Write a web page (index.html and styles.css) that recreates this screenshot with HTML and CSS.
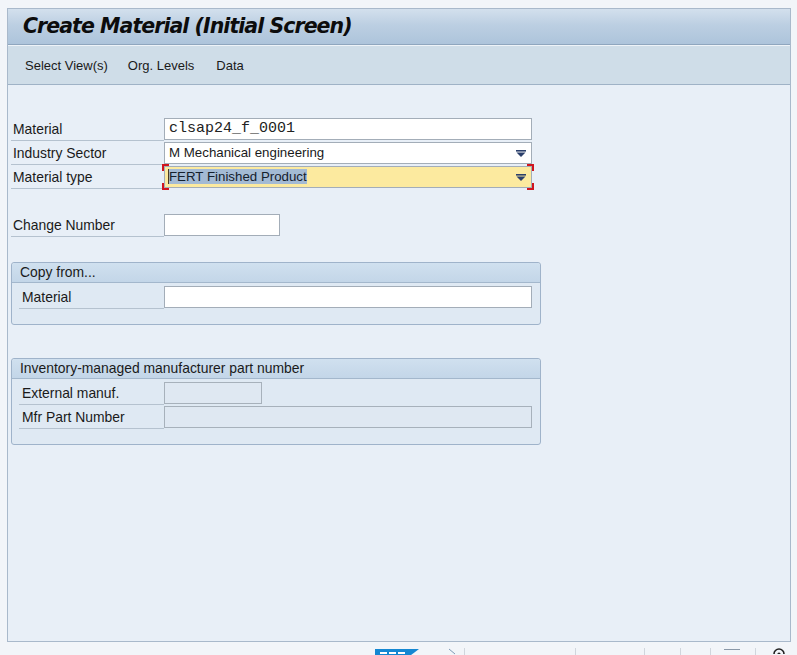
FILE: index.html
```html
<!DOCTYPE html>
<html>
<head>
<meta charset="utf-8">
<link rel="stylesheet" href="styles.css">
</head>
<body>
<div class="frame">
  <div class="panel">
    <header class="titlebar"><h1>Create Material (Initial Screen)</h1></header>
    <nav class="toolbar">
      <span class="tb-item">Select View(s)</span>
      <span class="tb-item">Org. Levels</span>
      <span class="tb-item">Data</span>
    </nav>
    <main class="content">
      <div class="form">
        <div class="row">
          <label class="lbl">Material</label>
          <div class="input wide mono">clsap24_f_0001</div>
        </div>
        <div class="row">
          <label class="lbl">Industry Sector</label>
          <div class="input wide select">M Mechanical engineering
            <svg class="arrow" width="10" height="7" viewBox="0 0 10 7"><rect x="0" y="0" width="10" height="1.6" fill="#2b3f6b"/><path d="M0.5 2.6 H9.5 L5 7 Z" fill="#2b3f6b"/></svg>
          </div>
        </div>
        <div class="row">
          <label class="lbl">Material type</label>
          <div class="focus-wrap">
            <div class="input wide select focused"><span class="caret"></span><span class="sel">FERT Finished Product</span>
              <svg class="arrow" width="10" height="7" viewBox="0 0 10 7"><rect x="0" y="0" width="10" height="1.6" fill="#2b3f6b"/><path d="M0.5 2.6 H9.5 L5 7 Z" fill="#2b3f6b"/></svg>
            </div>
            <span class="br tl"></span><span class="br tr"></span><span class="br bl"></span><span class="br brr"></span>
          </div>
        </div>
        <div class="row row-gap">
          <label class="lbl">Change Number</label>
          <div class="input short"></div>
        </div>
      </div>

      <section class="group g1">
        <div class="group-head">Copy from...</div>
        <div class="group-body">
          <div class="row">
            <label class="lbl">Material</label>
            <div class="input wide"></div>
          </div>
        </div>
      </section>

      <section class="group g2">
        <div class="group-head">Inventory-managed manufacturer part number</div>
        <div class="group-body">
          <div class="row">
            <label class="lbl">External manuf.</label>
            <div class="input mid disabled"></div>
          </div>
          <div class="row">
            <label class="lbl">Mfr Part Number</label>
            <div class="input wide disabled"></div>
          </div>
        </div>
      </section>
    </main>
  </div>
  <footer class="statusbar">
    <div class="sap-logo"><i class="l1"></i><i class="l2"></i><i class="l3"></i></div>
    <svg class="sb-icon" width="10" height="8" viewBox="0 0 10 8"><path d="M2 2 L8 7" stroke="#7f9bb8" stroke-width="1" fill="none"/></svg>
    <span class="sep s1"></span>
    <span class="sep s2"></span>
    <span class="sep s3"></span>
    <span class="sep s4"></span>
    <span class="sep s5"></span>
    <span class="sb-line"></span>
    <span class="sep s6"></span>
    <svg class="sb-circle" width="14" height="8" viewBox="0 0 14 8"><circle cx="7" cy="8" r="5" fill="none" stroke="#222" stroke-width="1.6"/><circle cx="7" cy="8" r="1.6" fill="#222"/></svg>
  </footer>
</div>
</body>
</html>
```

FILE: styles.css
```css
html, body {
  margin: 0;
  padding: 0;
}
body {
  background: #f2f5f9;
  font-family: "Liberation Sans", sans-serif;
  color: #111;
  width: 797px;
  height: 655px;
  overflow: hidden;
}
.frame {
  padding: 8px 0 0 7px;
  width: 790px;
}
.panel {
  width: 782px;
  height: 632px;
  border: 1px solid #a9b9cb;
  background: #e8eff7;
  display: flex;
  flex-direction: column;
}
.titlebar {
  height: 35px;
  background: linear-gradient(#d3e0ed 0%, #bccfe2 45%, #adc4db 100%);
  border-bottom: 1px solid #8fa6be;
  display: flex;
  align-items: center;
}
.titlebar h1 {
  margin: -1px 0 0 15px;
  font-family: "DejaVu Sans", sans-serif;
  font-size: 20.5px;
  font-weight: bold;
  font-style: italic;
  color: #0c0c0c;
  letter-spacing: -0.95px;
}
.toolbar {
  height: 38px;
  background: #cfdde8;
  border-top: 1px solid #eef3f8;
  border-bottom: 1px solid #9fb2c6;
  display: flex;
  align-items: center;
  padding-left: 17px;
  gap: 20px;
  font-family: "Liberation Sans", sans-serif;
  font-size: 13px;
  color: #1a1a1a;
}
.toolbar .tb-item:last-child {
  margin-left: 2px;
}
.content {
  flex: 1;
  padding: 33px 0 0 3px;
  font-family: "Liberation Sans", sans-serif;
  font-size: 13.9px;
  color: #1a1a1a;
}
.row {
  display: flex;
  align-items: flex-start;
  height: 22px;
  margin-bottom: 2px;
}
.lbl {
  width: 151px;
  height: 22px;
  line-height: 22px;
  padding-left: 2px;
  border-bottom: 1px solid #b5c2cf;
  box-sizing: content-box;
  flex: none;
  white-space: nowrap;
}
.input {
  height: 20px;
  border: 1px solid #a3adb8;
  background: #fff;
  box-sizing: content-box;
  position: relative;
  line-height: 20px;
  padding-left: 4px;
  white-space: nowrap;
  flex: none;
  font-size: 13.3px;
}
.wide { width: 362px; }
.short { width: 110px; }
.mid { width: 92px; }
.mono {
  font-family: "Liberation Mono", monospace;
  font-size: 15px;
  color: #222;
}
.select .arrow {
  position: absolute;
  right: 5px;
  top: 7px;
}
.focus-wrap {
  position: relative;
}
.focused {
  background: #fcea9f;
}
.sel {
  background: #a3bad4;
  color: #15202c;
}
.caret {
  display: inline-block;
  width: 2px;
  height: 15px;
  background: #4a3a22;
  vertical-align: -3px;
  margin-left: -1px;
  margin-right: -1px;
}
.br {
  position: absolute;
  width: 5px;
  height: 5px;
  border-color: #d0141e;
  border-style: solid;
  border-width: 0;
}
.br.tl { left: -2px; top: -2px; border-left-width: 2px; border-top-width: 2px; }
.br.tr { right: -2px; top: -2px; border-right-width: 2px; border-top-width: 2px; }
.br.bl { left: -2px; bottom: -2px; border-left-width: 2px; border-bottom-width: 2px; }
.br.brr { right: -2px; bottom: -2px; border-right-width: 2px; border-bottom-width: 2px; }
.row-gap {
  margin-top: 26px;
}
.group {
  width: 528px;
  border: 1px solid #9fb3ca;
  border-radius: 3px;
  background: #dfe9f3;
}
.g1 { margin-top: 26px; height: 61px; }
.g2 { margin-top: 33px; height: 85px; }
.group-head {
  height: 19px;
  line-height: 19px;
  background: linear-gradient(#d0e0ef, #c3d6e8);
  border-bottom: 1px solid #a3b7cc;
  padding-left: 8px;
  border-radius: 3px 3px 0 0;
}
.group-body {
  padding: 3px 0 0 7px;
}
.group-body .lbl {
  width: 142px;
  padding-left: 3px;
}
.disabled {
  background: #dfe8f2;
  border-color: #a7b1bb;
}
.statusbar {
  position: relative;
  height: 12px;
}
.sap-logo {
  position: absolute;
  left: 368px;
  top: 7px;
  width: 44px;
  height: 10px;
  background: #1487d2;
  clip-path: polygon(0 0, 100% 0, 70% 100%, 0 100%);
  overflow: hidden;
}
.sap-logo i {
  position: absolute;
  top: 3px;
  height: 2px;
  background: #fff;
}
.sap-logo .l1 { left: 5px; width: 7px; }
.sap-logo .l2 { left: 14px; width: 7px; }
.sap-logo .l3 { left: 23px; width: 7px; }
.sb-icon { position: absolute; left: 440px; top: 5px; }
.sep {
  position: absolute;
  top: 6px;
  width: 1px;
  height: 10px;
  background: #d0d6dd;
}
.s1 { left: 457px; }
.s2 { left: 568px; }
.s3 { left: 637px; }
.s4 { left: 673px; }
.s5 { left: 703px; }
.s6 { left: 748px; }
.sb-line {
  position: absolute;
  left: 717px;
  top: 7px;
  width: 16px;
  height: 1px;
  background: #8a98a8;
}
.sb-circle { position: absolute; left: 765px; top: 4px; }
```
